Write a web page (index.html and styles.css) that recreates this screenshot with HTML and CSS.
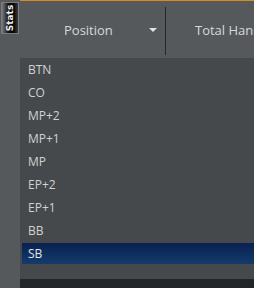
FILE: index.html
```html
<!DOCTYPE html>
<html lang="en">
<head>
    <meta charset="UTF-8">
    <meta name="viewport" content="width=device-width, initial-scale=1.0">
    <title>Stats</title>
    <link rel="stylesheet" href="styles.css">
</head>
<body>
    <div class="app">
        <aside class="side">
            <div class="stats-tab"><span>Stats</span></div>
        </aside>
        <main class="content">
            <header class="head">
                <div class="col col-position">
                    <span class="col-title">Position</span>
                    <span class="caret"></span>
                </div>
                <div class="divider"></div>
                <div class="col col-hands">
                    <span class="col-title">Total Hands</span>
                </div>
            </header>
            <ul class="dropdown">
                <li>BTN</li>
                <li>CO</li>
                <li>MP+2</li>
                <li>MP+1</li>
                <li>MP</li>
                <li>EP+2</li>
                <li>EP+1</li>
                <li>BB</li>
                <li class="selected">SB</li>
            </ul>
            <div class="footer-bar"></div>
        </main>
    </div>
</body>
</html>
```

FILE: styles.css
```css
html, body {
    margin: 0;
    padding: 0;
    height: 100%;
    overflow: hidden;
}
body {
    background-color: #55595c;
    font-family: "Open Sans", "Noto Sans", sans-serif;
    color: #d6d6d6;
}
.app {
    display: flex;
    height: 288px;
}
.side {
    width: 20px;
    flex-shrink: 0;
    padding-top: 2px;
}
.stats-tab {
    width: 18px;
    height: 32px;
    margin-left: 1px;
    box-sizing: border-box;
    border: 1px solid #7a7d80;
    background: linear-gradient(to right, #7a7a7a 0%, #111 40%, #000 70%, #3a3a3a 100%);
    display: flex;
    align-items: center;
    justify-content: center;
}
.stats-tab span {
    transform: rotate(-90deg);
    font-family: "DejaVu Sans", sans-serif;
    font-size: 9px;
    font-weight: bold;
    color: #f0f0f0;
    white-space: nowrap;
}
.content {
    flex: 1;
    display: flex;
    flex-direction: column;
    min-width: 0;
}
.head {
    height: 58px;
    box-sizing: border-box;
    border-top: 1px solid #d98a1e;
    display: flex;
    align-items: center;
    white-space: nowrap;
    overflow: hidden;
}
.col {
    display: flex;
    align-items: center;
    height: 100%;
    flex-shrink: 0;
}
.col-title {
    font-size: 13px;
    color: #d8d8d8;
}
.col-position {
    width: 145px;
    box-sizing: border-box;
    padding-left: 44px;
    padding-right: 8px;
}
.caret {
    width: 0;
    height: 0;
    margin-left: auto;
    border-left: 4px solid transparent;
    border-right: 4px solid transparent;
    border-top: 4px solid #e2e2e2;
}
.divider {
    width: 1px;
    height: 48px;
    margin-top: 2px;
    flex-shrink: 0;
    background-color: #25282a;
}
.col-hands {
    padding-left: 29px;
}
.dropdown {
    list-style: none;
    margin: 0;
    padding: 1px 0 0 2px;
    background-color: #45494c;
    flex: 1;
}
.dropdown li {
    height: 21px;
    line-height: 21px;
    margin-bottom: 2px;
    padding-left: 6px;
    font-size: 12px;
    color: #d2d2d2;
}
.dropdown li.selected {
    background: linear-gradient(to bottom, #0a2050, #123c6c);
    color: #e4e4e4;
}
.footer-bar {
    height: 9px;
    background-color: #232629;
}
```
